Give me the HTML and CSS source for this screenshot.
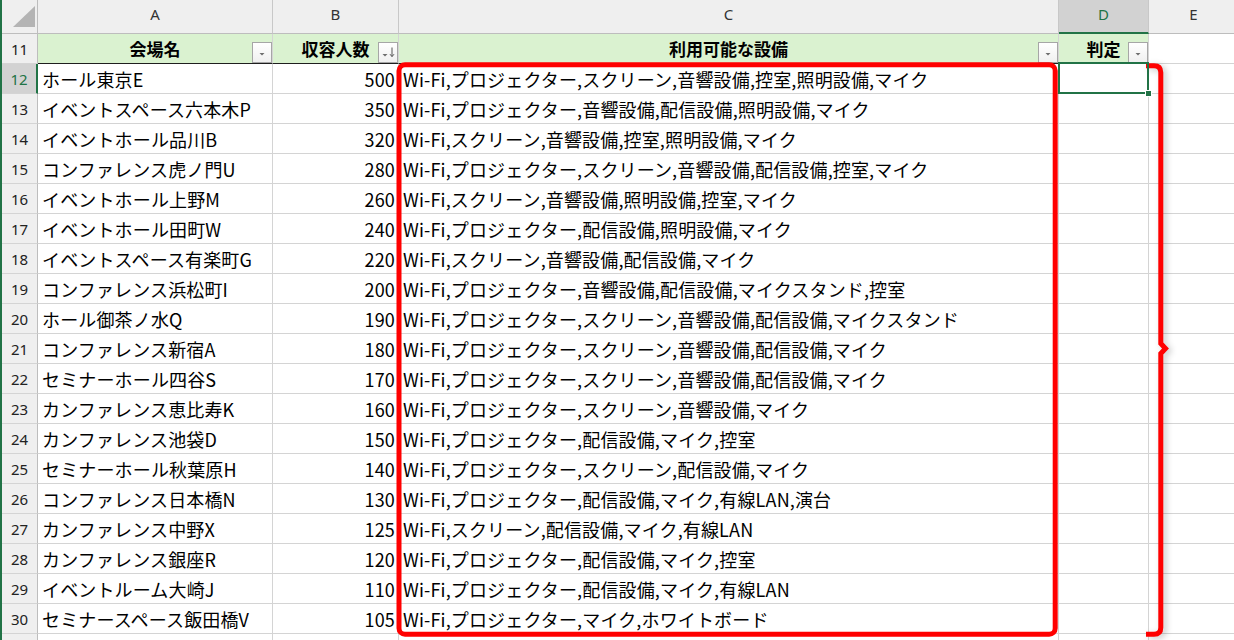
FILE: index.html
```html
<!DOCTYPE html>
<html lang="ja">
<head>
    <meta charset="UTF-8">
    <meta name="viewport" content="width=device-width, initial-scale=1.0">
    <title>会場一覧</title>
    <link rel="stylesheet" href="styles.css">
</head>
<body>

    <div class="sheet">
        <div class="grid">
            <!-- column letters -->
            <div class="corner"><span class="corner-tri"></span></div>
            <div class="colhead">A</div>
            <div class="colhead">B</div>
            <div class="colhead">C</div>
            <div class="colhead active">D</div>
            <div class="colhead">E</div>

            <!-- table header -->
            <div class="rowhead">11</div>
            <div class="cell th">会場名
                <span class="filter"><svg width="18" height="19" viewBox="0 0 18 19"><polygon points="6.5,10 11.5,10 9,12.5" fill="#6d6d6d"/></svg></span>
            </div>
            <div class="cell th">収容人数
                <span class="filter"><svg width="18" height="19" viewBox="0 0 18 19"><polygon points="3.5,11 8.5,11 6,13.5" fill="#6d6d6d"/><path d="M13 4.5 V13.5 M11 11.2 L13 13.6 L15 11.2" fill="none" stroke="#555" stroke-width="1"/></svg></span>
            </div>
            <div class="cell th">利用可能な設備
                <span class="filter"><svg width="18" height="19" viewBox="0 0 18 19"><polygon points="6.5,10 11.5,10 9,12.5" fill="#6d6d6d"/></svg></span>
            </div>
            <div class="cell th">判定
                <span class="filter"><svg width="18" height="19" viewBox="0 0 18 19"><polygon points="6.5,10 11.5,10 9,12.5" fill="#6d6d6d"/></svg></span>
            </div>
            <div class="cell"></div>

            <div class="rowhead active">12</div>
            <div class="cell">ホール東京E</div>
            <div class="cell num">500</div>
            <div class="cell">Wi-Fi,プロジェクター,スクリーン,音響設備,控室,照明設備,マイク</div>
            <div class="cell sel"></div>
            <div class="cell"></div>

            <div class="rowhead">13</div>
            <div class="cell">イベントスペース六本木P</div>
            <div class="cell num">350</div>
            <div class="cell">Wi-Fi,プロジェクター,音響設備,配信設備,照明設備,マイク</div>
            <div class="cell"></div>
            <div class="cell"></div>

            <div class="rowhead">14</div>
            <div class="cell">イベントホール品川B</div>
            <div class="cell num">320</div>
            <div class="cell">Wi-Fi,スクリーン,音響設備,控室,照明設備,マイク</div>
            <div class="cell"></div>
            <div class="cell"></div>

            <div class="rowhead">15</div>
            <div class="cell">コンファレンス虎ノ門U</div>
            <div class="cell num">280</div>
            <div class="cell">Wi-Fi,プロジェクター,スクリーン,音響設備,配信設備,控室,マイク</div>
            <div class="cell"></div>
            <div class="cell"></div>

            <div class="rowhead">16</div>
            <div class="cell">イベントホール上野M</div>
            <div class="cell num">260</div>
            <div class="cell">Wi-Fi,スクリーン,音響設備,照明設備,控室,マイク</div>
            <div class="cell"></div>
            <div class="cell"></div>

            <div class="rowhead">17</div>
            <div class="cell">イベントホール田町W</div>
            <div class="cell num">240</div>
            <div class="cell">Wi-Fi,プロジェクター,配信設備,照明設備,マイク</div>
            <div class="cell"></div>
            <div class="cell"></div>

            <div class="rowhead">18</div>
            <div class="cell">イベントスペース有楽町G</div>
            <div class="cell num">220</div>
            <div class="cell">Wi-Fi,スクリーン,音響設備,配信設備,マイク</div>
            <div class="cell"></div>
            <div class="cell"></div>

            <div class="rowhead">19</div>
            <div class="cell">コンファレンス浜松町I</div>
            <div class="cell num">200</div>
            <div class="cell">Wi-Fi,プロジェクター,音響設備,配信設備,マイクスタンド,控室</div>
            <div class="cell"></div>
            <div class="cell"></div>

            <div class="rowhead">20</div>
            <div class="cell">ホール御茶ノ水Q</div>
            <div class="cell num">190</div>
            <div class="cell">Wi-Fi,プロジェクター,スクリーン,音響設備,配信設備,マイクスタンド</div>
            <div class="cell"></div>
            <div class="cell"></div>

            <div class="rowhead">21</div>
            <div class="cell">コンファレンス新宿A</div>
            <div class="cell num">180</div>
            <div class="cell">Wi-Fi,プロジェクター,スクリーン,音響設備,配信設備,マイク</div>
            <div class="cell"></div>
            <div class="cell"></div>

            <div class="rowhead">22</div>
            <div class="cell">セミナーホール四谷S</div>
            <div class="cell num">170</div>
            <div class="cell">Wi-Fi,プロジェクター,スクリーン,音響設備,配信設備,マイク</div>
            <div class="cell"></div>
            <div class="cell"></div>

            <div class="rowhead">23</div>
            <div class="cell">カンファレンス恵比寿K</div>
            <div class="cell num">160</div>
            <div class="cell">Wi-Fi,プロジェクター,スクリーン,音響設備,マイク</div>
            <div class="cell"></div>
            <div class="cell"></div>

            <div class="rowhead">24</div>
            <div class="cell">カンファレンス池袋D</div>
            <div class="cell num">150</div>
            <div class="cell">Wi-Fi,プロジェクター,配信設備,マイク,控室</div>
            <div class="cell"></div>
            <div class="cell"></div>

            <div class="rowhead">25</div>
            <div class="cell">セミナーホール秋葉原H</div>
            <div class="cell num">140</div>
            <div class="cell">Wi-Fi,プロジェクター,スクリーン,配信設備,マイク</div>
            <div class="cell"></div>
            <div class="cell"></div>

            <div class="rowhead">26</div>
            <div class="cell">コンファレンス日本橋N</div>
            <div class="cell num">130</div>
            <div class="cell">Wi-Fi,プロジェクター,配信設備,マイク,有線LAN,演台</div>
            <div class="cell"></div>
            <div class="cell"></div>

            <div class="rowhead">27</div>
            <div class="cell">カンファレンス中野X</div>
            <div class="cell num">125</div>
            <div class="cell">Wi-Fi,スクリーン,配信設備,マイク,有線LAN</div>
            <div class="cell"></div>
            <div class="cell"></div>

            <div class="rowhead">28</div>
            <div class="cell">カンファレンス銀座R</div>
            <div class="cell num">120</div>
            <div class="cell">Wi-Fi,プロジェクター,配信設備,マイク,控室</div>
            <div class="cell"></div>
            <div class="cell"></div>

            <div class="rowhead">29</div>
            <div class="cell">イベントルーム大崎J</div>
            <div class="cell num">110</div>
            <div class="cell">Wi-Fi,プロジェクター,配信設備,マイク,有線LAN</div>
            <div class="cell"></div>
            <div class="cell"></div>

            <div class="rowhead">30</div>
            <div class="cell">セミナースペース飯田橋V</div>
            <div class="cell num">105</div>
            <div class="cell">Wi-Fi,プロジェクター,マイク,ホワイトボード</div>
            <div class="cell"></div>
            <div class="cell"></div>

            <!-- row 31, only its top edge is in view -->
            <div class="rowhead"></div>
            <div class="cell"></div>
            <div class="cell"></div>
            <div class="cell"></div>
            <div class="cell"></div>
            <div class="cell"></div>
        </div>

        <!-- red annotation: box around C12:C30 and a bracket beside D -->
        <svg class="marks" width="1234" height="640" viewBox="0 0 1234 640">
            <rect x="399" y="64.7" width="656.2" height="569.5" rx="6" fill="none" stroke="#ff0000" stroke-width="5"/>
            <path class="bracket" d="M1146 65.8 H1154 Q1160.8 65.8 1160.8 72.6 V343.5 L1165.5 348.5 L1160.8 353.5 V627.4 Q1160.8 634.2 1154 634.2 H1146" fill="none" stroke="#ff0000" stroke-width="5"/>
        </svg>
    </div>

</body>
</html>
```

FILE: styles.css
```css
body {
    margin: 0;
    background-color: white;
    font-family: "Noto Sans CJK JP", "Noto Sans", sans-serif;
    color: #000;
    overflow: hidden;
}
.sheet {
    position: relative;
    width: 1234px;
    height: 640px;
    overflow: hidden;
}
.grid {
    display: grid;
    grid-template-columns: 36px 235px 126px 660px 90px 90px;
    grid-template-rows: 34px repeat(21, 30px);
    border-left: 2px solid #217346;
}
.grid > div {
    box-sizing: border-box;
    display: flex;
    align-items: center;
    white-space: nowrap;
    overflow: hidden;
}
.corner {
    background-color: #efefef;
    border-right: 1px solid #bdbdbd;
    border-bottom: 1px solid #bdbdbd;
    justify-content: flex-end;
    align-items: flex-end !important;
    padding: 0 2px 6px 0;
}
.corner-tri {
    width: 22px;
    height: 21px;
    background-color: #b4b4b4;
    clip-path: polygon(100% 0, 100% 100%, 0 100%);
}
.colhead {
    background-color: #efefef;
    border-right: 1px solid #c8c8c8;
    border-bottom: 1px solid #bdbdbd;
    justify-content: center;
    padding-bottom: 5px;
    font-family: "Noto Sans", "Liberation Sans", sans-serif;
    font-size: 15px;
    color: #333;
}
.colhead.active {
    background-color: #d2d2d2;
    color: #217346;
    border-bottom: 2px solid #217346;
    padding-bottom: 4px;
}
.rowhead {
    background-color: #efefef;
    border-right: 1px solid #bdbdbd;
    border-bottom: 1px solid #d4d4d4;
    justify-content: center;
    font-family: "Noto Sans", "Liberation Sans", sans-serif;
    font-size: 15px;
    color: #222;
}
.rowhead.active {
    background-color: #d2d2d2;
    color: #217346;
    border-right: 2px solid #217346;
}
.cell {
    border-right: 1px solid #d4d4d4;
    border-bottom: 1px solid #d4d4d4;
    padding: 0 4px;
    font-size: 18px;
    letter-spacing: 0.15px;
}
.num {
    justify-content: flex-end;
    padding-right: 3px;
}
.th {
    position: relative;
    background-color: #daf2d0;
    border-bottom-color: #1e1e1e;
    justify-content: center;
    font-weight: bold;
    font-size: 17px;
    letter-spacing: 0;
}
.filter {
    position: absolute;
    right: 0;
    bottom: 0;
    width: 18px;
    height: 19px;
    border: 1px solid #a6a6a6;
    background: linear-gradient(#ffffff, #f0f0f0);
    display: flex;
}
.sel {
    position: relative;
    z-index: 2;
    overflow: visible !important;
}
.sel::after {
    content: "";
    position: absolute;
    left: -1px;
    top: -2px;
    right: -1px;
    bottom: -1px;
    border: 2px solid #217346;
}
.sel::before {
    content: "";
    position: absolute;
    right: -4px;
    bottom: -4px;
    width: 5px;
    height: 5px;
    background-color: #217346;
    border: 1px solid #fff;
    z-index: 1;
}
.marks {
    position: absolute;
    left: 0;
    top: 0;
    pointer-events: none;
}
.bracket {
    filter: drop-shadow(3px 2px 3px rgba(0, 0, 0, 0.22));
}
```
